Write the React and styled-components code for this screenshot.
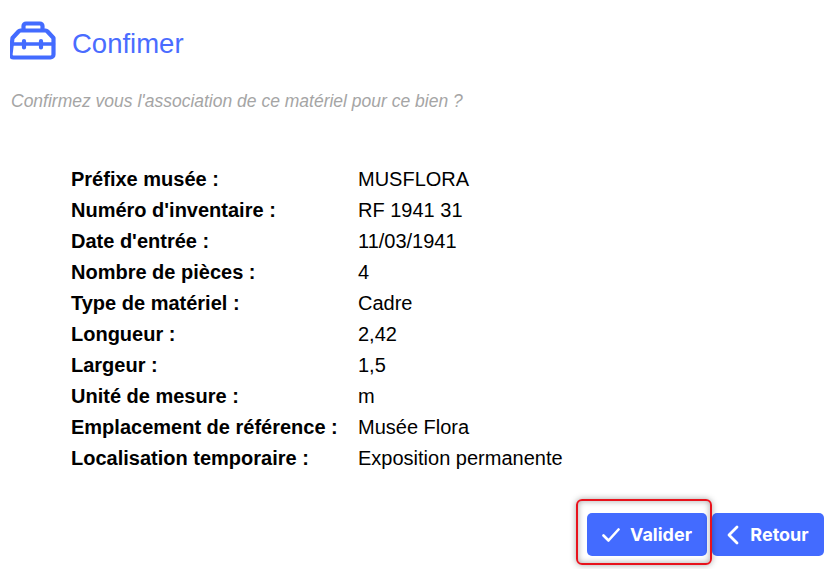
import React from "react";
import styled, { createGlobalStyle } from "styled-components";

const GlobalStyle = createGlobalStyle`
  html, body {
    margin: 0;
    padding: 0;
    background: #fff;
    font-family: "Liberation Sans", Arial, sans-serif;
  }
`;

const Page = styled.div`
  width: 836px;
  height: 569px;
  overflow: hidden;
  display: flex;
  flex-direction: column;
`;

const Header = styled.header`
  display: flex;
  align-items: center;
  gap: 16px;
  height: 40px;
  margin: 21px 0 0 10px;
`;

const Title = styled.h1`
  margin: 6px 0 0;
  font-size: 27.5px;
  font-weight: 400;
  color: #4a6cff;
`;

const Subtitle = styled.p`
  margin: 30px 0 0 11px;
  font-size: 17.5px;
  line-height: 20px;
  font-style: italic;
  color: #a5a5a5;
`;

const Details = styled.dl`
  display: grid;
  grid-template-columns: 287px 1fr;
  grid-auto-rows: 31px;
  margin: 53px 0 0 71px;
  font-size: 20px;
  line-height: 31px;
  color: #000;
`;

const Label = styled.dt`
  font-weight: 700;
`;

const Value = styled.dd`
  margin: 0;
`;

const Actions = styled.div`
  display: flex;
  justify-content: flex-end;
  gap: 5px;
  margin: 39px 12px 0 0;
`;

const Highlight = styled.div`
  position: relative;
  &::after {
    content: "";
    position: absolute;
    inset: -14px -5px -9px -11px;
    border: 2px solid #e8121c;
    border-radius: 6px;
    box-shadow: 0 0 6px rgba(0, 0, 0, 0.35), inset 0 0 6px rgba(0, 0, 0, 0.35);
    pointer-events: none;
  }
`;

const Button = styled.button`
  display: flex;
  align-items: center;
  justify-content: center;
  gap: ${(p) => p.$gap}px;
  width: ${(p) => p.$width}px;
  height: 43px;
  padding: 0;
  border: none;
  border-radius: 5px;
  background: #436bff;
  color: #fff;
  font-family: "Inter", sans-serif;
  font-size: 18px;
  font-weight: 700;
`;

const ToolboxIcon = () => (
  <svg width="46" height="40" viewBox="0 0 46 40" fill="none" stroke="#436bff" strokeWidth="4.2" strokeLinejoin="round" strokeLinecap="round">
    <path d="M13.5 9V5a2.5 2.5 0 0 1 2.5-2.5h14A2.5 2.5 0 0 1 32.5 5v4" />
    <path d="M2.5 17l6-6.5a3 3 0 0 1 2-1h25a3 3 0 0 1 2 1l6 6.5v16.5a3 3 0 0 1-3 3h-37a3 3 0 0 1-3-3z" />
    <path d="M2.5 23h41" strokeWidth="3.5" />
    <path d="M14 20v6.5M31 20v6.5" />
  </svg>
);

const CheckIcon = () => (
  <svg width="18" height="14" viewBox="0 0 18 14" fill="none" stroke="#fff" strokeWidth="2.6" strokeLinecap="round" strokeLinejoin="round">
    <path d="M1.5 7.5 6.5 12.5 16.5 1.5" />
  </svg>
);

const ChevronIcon = () => (
  <svg width="12" height="20" viewBox="0 0 12 20" fill="none" stroke="#fff" strokeWidth="2.8" strokeLinecap="round" strokeLinejoin="round">
    <path d="M10 2 2 10l8 8" />
  </svg>
);

const rows = [
  ["Préfixe musée :", "MUSFLORA"],
  ["Numéro d'inventaire :", "RF 1941 31"],
  ["Date d'entrée :", "11/03/1941"],
  ["Nombre de pièces :", "4"],
  ["Type de matériel :", "Cadre"],
  ["Longueur :", "2,42"],
  ["Largeur :", "1,5"],
  ["Unité de mesure :", "m"],
  ["Emplacement de référence :", "Musée Flora"],
  ["Localisation temporaire :", "Exposition permanente"],
];

export default function App() {
  return (
    <Page>
      <GlobalStyle />
      <Header>
        <ToolboxIcon />
        <Title>Confimer</Title>
      </Header>
      <Subtitle>Confirmez vous l'association de ce matériel pour ce bien ?</Subtitle>
      <Details>
        {rows.map(([label, value]) => (
          <React.Fragment key={label}>
            <Label>{label}</Label>
            <Value>{value}</Value>
          </React.Fragment>
        ))}
      </Details>
      <Actions>
        <Highlight>
          <Button $width={120} $gap={10}>
            <CheckIcon />
            Valider
          </Button>
        </Highlight>
        <Button $width={112} $gap={11}>
          <ChevronIcon />
          Retour
        </Button>
      </Actions>
    </Page>
  );
}
